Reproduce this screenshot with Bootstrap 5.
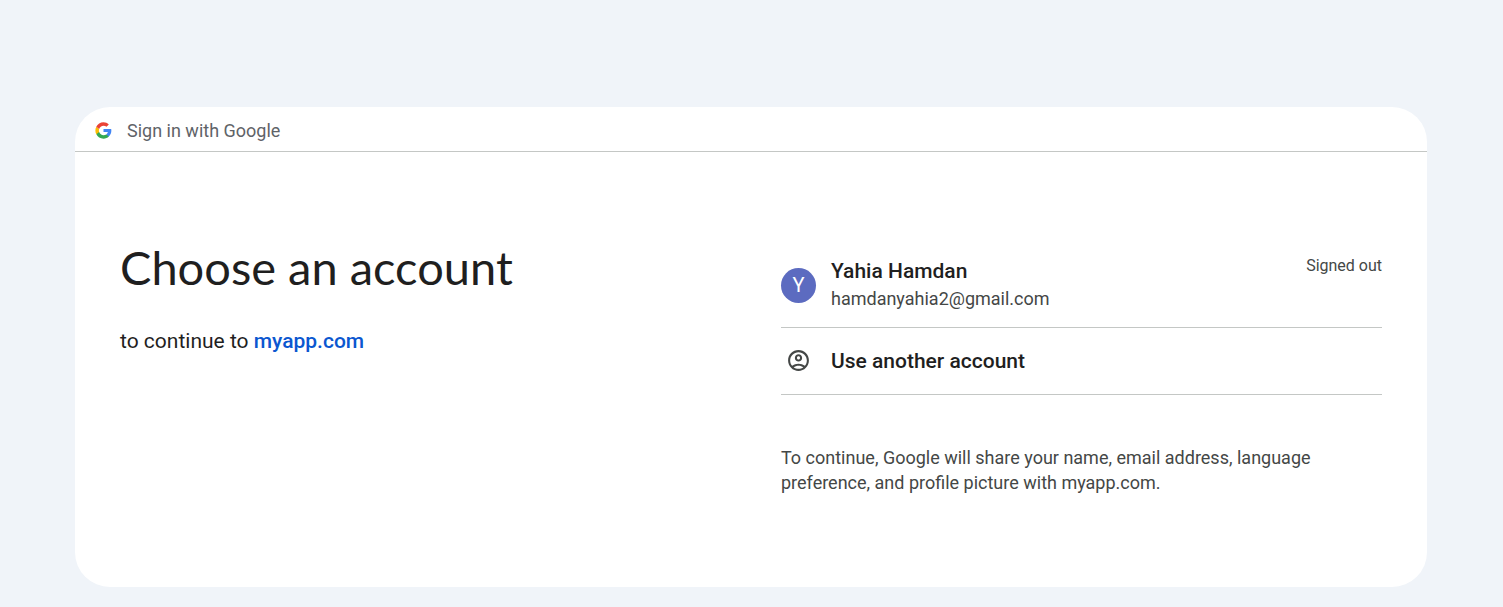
<!DOCTYPE html>
<html lang="en">
<head>
<meta charset="utf-8">
<meta name="viewport" content="width=device-width, initial-scale=1">
<title>Sign in - Google Accounts</title>
<link href="https://cdn.jsdelivr.net/npm/bootstrap@5.3.0/dist/css/bootstrap.min.css" rel="stylesheet">
<style>
body{background:#f0f4f9;color:#1f1f1f;font-family:Roboto,sans-serif}
.page{padding:107px 76px 20px 75px}
.panel{background:#fff;border-radius:35px;min-height:480px}
.panel-top{height:45px;padding:3px 20px 0;border-bottom:1px solid #c4c7c5;color:#5f6368;font-size:18px;gap:15px}
.panel-body{padding:87px 45px 80px}
.panel-body .row{--bs-gutter-x:60px}
.title{font-family:Lato,sans-serif;font-size:47px;line-height:56px;font-weight:400;margin-bottom:31px}
.lede{font-size:21px;line-height:30px}
.lede a{color:#0b57d0;font-weight:500;text-decoration:none}
.account{padding:18px 0 14px;border:0;border-bottom:1px solid #c4c7c5;gap:15px;background:none;color:#1f1f1f}
.other{padding:15px 0 16px}
.disc{width:35px;height:35px}
.avatar{background:#5c6bc0;color:#fff;font-size:20px}
.who{font-size:21px;line-height:28px;font-weight:500}
.mail{font-size:18px;line-height:28px;color:#444746}
.state{font-size:16px;line-height:18px;color:#444746}
.note{font-size:18px;line-height:25px;color:#444746;margin:50px 0 0}
</style>
</head>
<body>
<main class="page">
<div class="panel">
<header class="panel-top d-flex align-items-center">
<svg width="17" height="17" viewBox="0 0 48 48" aria-hidden="true"><path fill="#4285F4" d="M46.12 24.5c0-1.56-.14-3.06-.4-4.5H24v8.51h12.4c-.51 2.75-2.06 5.08-4.39 6.64v5.52h7.11c4.16-3.83 7-9.47 7-16.17z"/><path fill="#34A853" d="M24 47c5.94 0 11.3-1.97 15.1-5.8l-7.5-6.05c-1.97 1.32-4.49 2.1-7.45 2.1-5.73 0-10.58-3.87-12.31-9.07H3.6v5.7C7.2 41.9 15 47 24 47z"/><path fill="#FBBC05" d="M11.69 28.18C11.25 26.86 11 25.45 11 24s.25-2.86.69-4.18l-8-6.2A23 23 0 0 0 1 24c0 3.55.85 7.2 2.6 10.4l8.09-6.22z"/><path fill="#EA4335" d="M24 10.3c3.23 0 6.13 1.2 8.41 3.4l6.6-6.6C34.91 3.2 29.93 1 24 1 15 1 7.2 6 3.6 13.7l8.09 6.12c1.73-5.2 6.58-9.52 12.31-9.52z"/></svg>
<span>Sign in with Google</span>
</header>
<div class="panel-body">
<div class="row">
<section class="col-md-6">
<h1 class="title">Choose an account</h1>
<p class="lede mb-0">to continue to <a href="#">myapp.com</a></p>
</section>
<section class="col-md-6">
<ul class="list-unstyled mb-0">
<li><button type="button" class="account d-flex align-items-center w-100 text-start">
<span class="disc avatar rounded-circle d-flex align-items-center justify-content-center flex-shrink-0">Y</span>
<span class="flex-grow-1"><span class="who d-block">Yahia Hamdan</span><span class="mail d-block">hamdanyahia2@gmail.com</span></span>
<span class="state align-self-start">Signed out</span>
</button></li>
<li><button type="button" class="account other d-flex align-items-center w-100 text-start">
<span class="disc d-flex align-items-center justify-content-center flex-shrink-0"><svg width="25" height="25" viewBox="0 0 24 24" fill="#444746" aria-hidden="true"><path d="M12 2C6.48 2 2 6.48 2 12s4.48 10 10 10 10-4.48 10-10S17.52 2 12 2zM7.35 18.5C8.66 17.56 10.26 17 12 17s3.34.56 4.65 1.5C15.34 19.44 13.74 20 12 20s-3.34-.56-4.65-1.5zm10.79-1.38C16.45 15.8 14.32 15 12 15s-4.45.8-6.14 2.12C4.7 15.73 4 13.95 4 12c0-4.42 3.58-8 8-8s8 3.58 8 8c0 1.95-.7 3.73-1.86 5.12zM12 6c-1.93 0-3.5 1.57-3.5 3.5S10.07 13 12 13s3.5-1.57 3.5-3.5S13.93 6 12 6zm0 5c-.83 0-1.5-.67-1.5-1.5S11.17 8 12 8s1.5.67 1.5 1.5S12.83 11 12 11z"/></svg></span>
<span class="who">Use another account</span>
</button></li>
</ul>
<p class="note">To continue, Google will share your name, email address, language preference, and profile picture with myapp.com.</p>
</section>
</div>
</div>
</div>
</main>
<script src="https://cdn.jsdelivr.net/npm/bootstrap@5.3.0/dist/js/bootstrap.bundle.min.js"></script>
</body>
</html>
